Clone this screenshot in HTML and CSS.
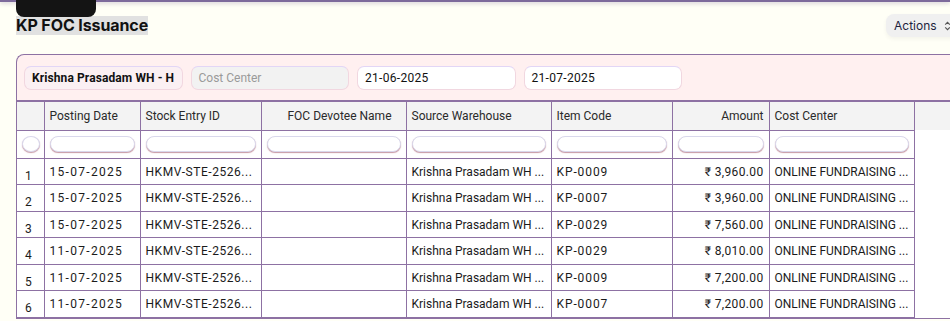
FILE: index.html
```html
<!DOCTYPE html>
<html>
<head>
<meta charset="utf-8">
<link rel="stylesheet" href="styles.css">
</head>
<body>
<div class="topline"></div>
<div class="tab"></div>
<div class="page">
  <div class="head">
    <h1 class="title">KP FOC Issuance</h1>
    <button class="actions">Actions
      <svg width="7" height="10" viewBox="0 0 7 10"><path d="M1.2 3.6 L3.5 1.3 L5.8 3.6" fill="none" stroke="#555" stroke-width="1.1"/><path d="M1.2 6.4 L3.5 8.7 L5.8 6.4" fill="none" stroke="#555" stroke-width="1.1"/></svg>
    </button>
  </div>
  <div class="panel">
    <div class="filters">
      <div class="field bold">Krishna Prasadam WH - H</div>
      <div class="field muted">Cost Center</div>
      <div class="field white">21-06-2025</div>
      <div class="field white">21-07-2025</div>
    </div>
    <div class="gridwrap">
      <table class="grid">
        <colgroup>
          <col class="c0"><col class="c1"><col class="c2"><col class="c3"><col class="c4"><col class="c5"><col class="c6"><col class="c7">
        </colgroup>
        <thead>
          <tr class="hrow">
            <th></th><th>Posting Date</th><th>Stock Entry ID</th><th class="center">FOC Devotee Name</th><th>Source Warehouse</th><th>Item Code</th><th class="right">Amount</th><th>Cost Center</th>
          </tr>
          <tr class="frow">
            <td><span class="chk"></span></td>
            <td><span class="pill"></span></td><td><span class="pill"></span></td><td><span class="pill"></span></td><td><span class="pill"></span></td><td><span class="pill"></span></td><td><span class="pill"></span></td><td><span class="pill"></span></td>
          </tr>
        </thead>
        <tbody>
          <tr><td class="num">1</td><td class="date">15-07-2025</td><td class="sid">HKMV-STE-2526...</td><td></td><td>Krishna Prasadam WH ...</td><td class="code">KP-0009</td><td class="right amt">₹ 3,960.00</td><td>ONLINE FUNDRAISING ...</td></tr>
          <tr><td class="num">2</td><td class="date">15-07-2025</td><td class="sid">HKMV-STE-2526...</td><td></td><td>Krishna Prasadam WH ...</td><td class="code">KP-0007</td><td class="right amt">₹ 3,960.00</td><td>ONLINE FUNDRAISING ...</td></tr>
          <tr><td class="num">3</td><td class="date">15-07-2025</td><td class="sid">HKMV-STE-2526...</td><td></td><td>Krishna Prasadam WH ...</td><td class="code">KP-0029</td><td class="right amt">₹ 7,560.00</td><td>ONLINE FUNDRAISING ...</td></tr>
          <tr><td class="num">4</td><td class="date">11-07-2025</td><td class="sid">HKMV-STE-2526...</td><td></td><td>Krishna Prasadam WH ...</td><td class="code">KP-0029</td><td class="right amt">₹ 8,010.00</td><td>ONLINE FUNDRAISING ...</td></tr>
          <tr><td class="num">5</td><td class="date">11-07-2025</td><td class="sid">HKMV-STE-2526...</td><td></td><td>Krishna Prasadam WH ...</td><td class="code">KP-0009</td><td class="right amt">₹ 7,200.00</td><td>ONLINE FUNDRAISING ...</td></tr>
          <tr><td class="num">6</td><td class="date">11-07-2025</td><td class="sid">HKMV-STE-2526...</td><td></td><td>Krishna Prasadam WH ...</td><td class="code">KP-0007</td><td class="right amt">₹ 7,200.00</td><td>ONLINE FUNDRAISING ...</td></tr>
        </tbody>
      </table>
    </div>
  </div>
</div>
</body>
</html>
```

FILE: styles.css
```css
* { box-sizing: border-box; }
html, body { margin: 0; padding: 0; }
body {
  background: #fffff6;
  font-family: Roboto, "Liberation Sans", sans-serif;
  color: #1c1c1c;
  overflow: hidden;
  height: 321px;
  position: relative;
}
.topline {
  height: 2px;
  background: #7d6a9b;
  box-shadow: 0 1px 4px rgba(110, 90, 140, 0.45);
}
.tab {
  position: absolute;
  left: 16px;
  top: 0;
  width: 80px;
  height: 17px;
  background: #141414;
  border-radius: 0 0 8px 8px;
}
.page {
  padding: 14px 0 0 16px;
}
.head {
  display: flex;
  justify-content: space-between;
  align-items: flex-start;
  height: 38px;
}
.title {
  margin: 0;
  font-family: Inter, "Liberation Sans", sans-serif;
  font-size: 16px;
  font-weight: 700;
  line-height: 19px;
  background: #e1e1e1;
  color: #111;
  letter-spacing: -0.1px;
}
.actions {
  margin-top: -2px;
  margin-right: -6px;
  width: 70px;
  height: 23px;
  border: none;
  border-radius: 8px 0 0 8px;
  background: #f0f0f0;
  box-shadow: 0 2px 4px rgba(0,0,0,0.05);
  font-family: Inter, "Liberation Sans", sans-serif;
  font-size: 12px;
  color: #1e1f3d;
  display: flex;
  align-items: center;
  gap: 7px;
  padding: 0 0 0 8px;
}
.panel {
  margin-right: -20px;
  border: 1px solid #8d71a3;
  border-right: none;
  border-radius: 8px 0 0 0;
  background: #fff0f0;
}
.filters {
  display: flex;
  gap: 8px;
  padding: 11px 7px 10px 7px;
}
.field {
  width: 158.5px;
  height: 24px;
  border-radius: 7px;
  border: 1px solid #f1d7e0;
  border-top-color: #e2d6f6;
  padding: 0 7px;
  font-size: 12px;
  line-height: 22px;
  white-space: nowrap;
  overflow: hidden;
}
.bold { font-weight: 700; background: #fbf0f3; color: #111; letter-spacing: 0.1px; }
.muted { background: #f2f2f2; color: #9a9a9a; }
.white { background: #fff; color: #111; letter-spacing: 0.3px; }
.gridwrap {
  border-top: 2px solid #8d71a3;
  background: linear-gradient(#f3f3f3 0 28px, #fff 28px);
}
.grid {
  border-collapse: collapse;
  table-layout: fixed;
  width: 897px;
  font-size: 12px;
}
.c0 { width: 27px; }
.c1 { width: 96px; }
.c2 { width: 121px; }
.c3 { width: 145px; }
.c4 { width: 145px; }
.c5 { width: 121px; }
.c6 { width: 97px; }
.c7 { width: 145px; }
.grid th, .grid td {
  border: 1px solid #8d71a3;
  padding: 0 5px;
  white-space: nowrap;
  overflow: hidden;
  text-align: left;
}
.grid tr > :first-child { border-left: none; }
.grid th {
  height: 28px;
  font-weight: 400;
  color: #2a2a2a;
  background: #f3f3f3;
  border-top: none;
  padding-top: 1px;
}
.grid th.center { text-align: center; padding-left: 17px; }
.grid .right { text-align: right; }
.frow td { height: 28px; padding: 0 5px; background: #fff; }
.pill {
  display: block;
  height: 16px;
  border-radius: 8px;
  background: #fff;
  border: 1px solid #d9d8ec;
  box-shadow: 0 1px 1px rgba(175, 110, 125, 0.7);
}
.frow td:first-child { padding: 0 4px 0 5px; }
.chk {
  display: block;
  width: 18px;
  height: 16px;
  border-radius: 50%;
  background: #fff;
  border: 1px solid #d9d8ec;
  box-shadow: 0 1px 1px rgba(175, 110, 125, 0.7);
}
.grid tbody td {
  height: 26.5px;
  padding-top: 1px;
  color: #1b1b1b;
}
.date { letter-spacing: 1.3px; }
.sid { letter-spacing: 0.55px; }
.code { letter-spacing: 0.9px; }
.amt { letter-spacing: 0.35px; }
.num { padding: 9px 0 0 8px !important; font-size: 12px; }
```
